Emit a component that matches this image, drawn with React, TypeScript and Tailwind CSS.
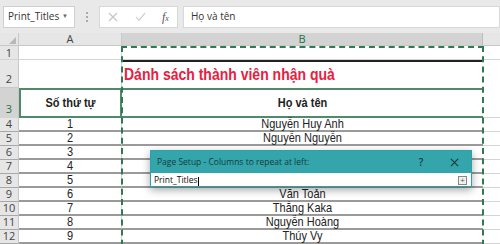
import React from "react";

const rows = [
  { n: "4", a: "1", b: "Nguyễn Huy Anh" },
  { n: "5", a: "2", b: "Nguyễn Nguyễn" },
  { n: "6", a: "3", b: "" },
  { n: "7", a: "4", b: "" },
  { n: "8", a: "5", b: "" },
  { n: "9", a: "6", b: "Văn Toản" },
  { n: "10", a: "7", b: "Thắng Kaka" },
  { n: "11", a: "8", b: "Nguyễn Hoàng" },
  { n: "12", a: "9", b: "Thúy Vy" },
];

const Tall: React.FC<{ children: React.ReactNode }> = ({ children }) => (
  <span className="inline-block scale-y-[1.12]">{children}</span>
);

const App: React.FC = () => {
  return (
    <div className="relative w-[500px] h-[244px] overflow-hidden bg-white font-['Liberation_Sans',Arial,sans-serif] text-[#222]">
      {/* Formula bar */}
      <div className="flex items-center h-[33px] bg-[#e9e9e9] font-['Open_Sans',sans-serif] text-[10px] text-[#333]">
        <div className="ml-[3px] flex items-center justify-between w-[72px] h-[22px] bg-white border border-[#d0d0d0] pl-[4px] pr-[6px]">
          <Tall>Print_Titles</Tall>
          <span className="text-[6px] text-[#666]">▼</span>
        </div>
        <div className="w-[24px] flex flex-col items-center gap-[2px]">
          <span className="w-[2px] h-[2px] bg-[#aaa]" />
          <span className="w-[2px] h-[2px] bg-[#aaa]" />
          <span className="w-[2px] h-[2px] bg-[#aaa]" />
        </div>
        <div className="flex items-center justify-around w-[79px] h-[22px] bg-white border border-[#d8d8d8]">
          <svg width="10" height="10" viewBox="0 0 10 10">
            <path d="M1 1 L9 9 M9 1 L1 9" stroke="#c4c4c4" strokeWidth="1.1" />
          </svg>
          <svg width="11" height="10" viewBox="0 0 11 10">
            <path d="M1 5 L4 8.5 L10 1" stroke="#c4c4c4" strokeWidth="1.1" fill="none" />
          </svg>
          <span className="font-['Liberation_Serif',serif] italic text-[#555] text-[12px]">
            f<span className="text-[8px]">x</span>
          </span>
        </div>
        <div className="ml-[5px] flex-1 h-[22px] bg-white border border-[#d8d8d8] pl-[7px] flex items-center">
          <Tall>Họ và tên</Tall>
        </div>
      </div>

      {/* Column headers */}
      <div className="flex h-[13px] bg-[#e6e6e6] border-b border-[#c8c8c8] text-[11px] leading-[12px] text-[#444] font-['Open_Sans',sans-serif]">
        <div className="w-[19px] border-r border-[#c8c8c8] flex items-end justify-end pr-[2px] pb-[1px]">
          <span className="w-0 h-0 border-l-[7px] border-l-transparent border-b-[7px] border-b-[#b8b8b8]" />
        </div>
        <div className="w-[103px] border-r border-[#c8c8c8] text-center">A</div>
        <div className="w-[361px] bg-[#d3d3d3] border-r border-[#bdbdbd] text-center text-[#217346]">B</div>
        <div className="flex-1" />
      </div>

      {/* Row 1 */}
      <div className="flex h-[14px] border-b border-[#d4d4d4] text-[11px] leading-[13px] font-['Open_Sans',sans-serif]">
        <div className="w-[19px] bg-[#e6e6e6] border-r border-[#c8c8c8] text-center text-[#444]">1</div>
        <div className="w-[103px] border-r border-[#d4d4d4]" />
        <div className="w-[361px]" />
        <div className="flex-1" />
      </div>

      {/* Row 2 */}
      <div className="flex h-[28px] text-[11px] leading-[12px]">
        <div className="w-[19px] bg-[#e6e6e6] border-r border-[#c8c8c8] border-b border-b-[#c8c8c8] flex items-end justify-center pb-[2px] text-[#444] font-['Open_Sans',sans-serif]">2</div>
        <div className="w-[103px] border-r border-[#d4d4d4]" />
        <div className="w-[361px] border-t-2 border-t-[#222] pl-[2px] pt-[4px] text-[14px] leading-[16px] font-bold text-[#e8203f]">
          <Tall>Dánh sách thành viên nhận quà</Tall>
        </div>
        <div className="flex-1" />
      </div>

      {/* Row 3 */}
      <div className="flex h-[30px] text-[11px] leading-[12px]">
        <div className="w-[19px] bg-[#d3d3d3] border-r border-[#c8c8c8] flex items-end justify-center pb-[3px] text-[#217346] font-['Open_Sans',sans-serif]">3</div>
        <div className="w-[103px] border-2 border-[#4f8a6a] flex items-center justify-center font-bold"><Tall>Số thứ tự</Tall></div>
        <div className="w-[361px] border-y-2 border-[#4f8a6a] flex items-center justify-center font-bold"><Tall>Họ và tên</Tall></div>
        <div className="flex-1 border-b border-[#d4d4d4]" />
      </div>

      {/* Rows 4-12 */}
      {rows.map((r) => (
        <div key={r.n} className="flex h-[14px] text-[11px] leading-[12px]">
          <div className="w-[19px] bg-[#e6e6e6] border-r border-[#c8c8c8] border-b border-b-[#a8a8a8] text-center text-[#444] font-['Open_Sans',sans-serif]">{r.n}</div>
          <div className="w-[103px] border-b-2 border-[#9a9a9a] border-r border-r-[#d4d4d4] text-center"><Tall>{r.a}</Tall></div>
          <div className="w-[361px] border-b-2 border-[#9a9a9a] text-center"><Tall>{r.b}</Tall></div>
          <div className="flex-1 border-b border-[#d4d4d4]" />
        </div>
      ))}

      {/* Marching ants around column B */}
      <div className="absolute left-[121px] top-[46px] w-[363px] h-[210px] border-2 border-dashed border-[#2d7a55] pointer-events-none" />

      {/* Page Setup dialog */}
      <div className="absolute left-[150px] top-[150px] w-[322px] h-[37px] bg-white border border-[#2aa3a8] shadow-[0_3px_8px_rgba(0,0,0,0.35)] font-['Open_Sans',sans-serif]">
        <div className="flex items-center h-[22px] bg-[#33a5ab] pl-[6px] text-[8.5px] text-[#173a3c]">
          <span className="flex-1"><Tall>Page Setup - Columns to repeat at left:</Tall></span>
          <span className="w-[10px] text-center text-[10px] font-semibold">?</span>
          <svg className="ml-[24px] mr-[12px]" width="9" height="9" viewBox="0 0 10 10">
            <path d="M1 1 L9 9 M9 1 L1 9" stroke="#173a3c" strokeWidth="1.3" />
          </svg>
        </div>
        <div className="flex items-center h-[14px] pl-[3px] pr-[4px] text-[8.5px] leading-[11px] text-[#111]">
          <span className="flex-1">Print_Titles<span className="inline-block w-px h-[9px] bg-black align-middle" /></span>
          <span className="w-[9px] h-[9px] border border-[#888] bg-[#f0f0f0] flex items-center justify-center text-[8px] leading-none text-[#555]">+</span>
        </div>
      </div>
    </div>
  );
};

export default App;
